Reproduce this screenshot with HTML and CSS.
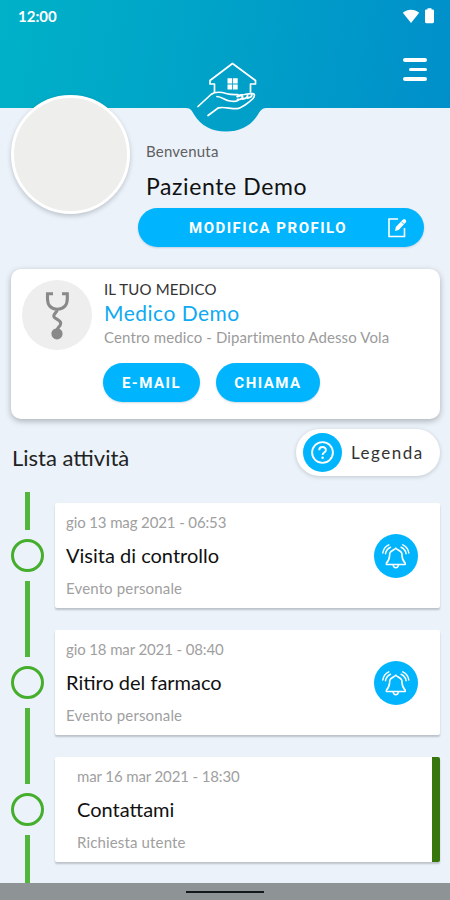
FILE: index.html
```html
<!DOCTYPE html>
<html lang="it">
<head>
    <meta charset="UTF-8">
    <meta name="viewport" content="width=device-width, initial-scale=1.0">
    <title>Paziente Demo</title>
    <link rel="stylesheet" href="styles.css">
</head>
<body>
    <svg width="0" height="0" class="defs">
        <symbol id="bell" viewBox="0 0 44 44">
            <g fill="none" stroke="#fff" stroke-width="1.6" stroke-linecap="round" stroke-linejoin="round">
                <path d="M21.800 14.200c-1 1.600-5.200 2.600-6 5-.5 4 .3 6.500-3.400 9.800v1.500h18.800v-1.500c-3.700-3.300-2.900-5.800-3.400-9.800-.8-2.400-5-3.400-6-5z"/>
                <path d="M19.200 31c.4 3.600 4.800 3.600 5.200 0"/>
                <path d="M14.800 10.800c-3.500 1.700-5.500 4.500-6 8.200M16.500 13.200c-3 1.400-4.600 3.600-5 6.500M28.800 10.800c3.500 1.700 5.500 4.500 6 8.200M27.100 13.200c3 1.400 4.600 3.600 5 6.500" stroke-width="1.500"/>
            </g>
        </symbol>
    </svg>

    <div class="header">
        <div class="status-bar">
            <span>12:00</span>
            <div class="status-icons">
                <svg width="18" height="15" viewBox="0 0 18 15"><path d="M.8 3.800C5.500-.4 12.500-.4 17.200 3.800L9 14z" fill="#fff"/></svg>
                <svg width="9" height="16" viewBox="0 0 9 16"><path d="M2.500 1.500V.3h4v1.200h1.200Q9 1.500 9 2.800v11Q9 15.200 7.700 15.200H1.300Q0 15.200 0 13.800v-11Q0 1.500 1.300 1.500z" fill="#fff"/></svg>
            </div>
        </div>
        <div class="menu">
            <span></span>
            <span class="short"></span>
            <span></span>
        </div>
        <svg class="logo" width="100" height="84" viewBox="0 0 100 84">
            <path d="M6 58C11 58 12 61 14 64.500C21 76 32 81.500 46 81.500S71 76 78 64.500C80 61 82 58 86 58z" fill="#00a0c8"/>
            <g fill="none" stroke="#fff" stroke-width="1.700" stroke-linejoin="round" stroke-linecap="round">
                <path d="M34.500 42V34h-4.500v-3.500L52.500 13.500l23 17V34h-5v8"/>
                <path d="M18 56.500L31 44.500c4.500-3.500 12-2 16-.8 3.500 1 7 .8 11 .9"/>
                <path d="M37 46.500c5 .3 8 4 13 4.500 3 .4 8 .6 8.500-1.500"/>
                <path d="M28 65.500l10.500-7.700c6-1.300 12.500 1.200 18.500.8 4.500-.5 12.500-6.500 16-10.100 2-2.500 1.800-4.500 0-4.800-3-.5-6 .3-8.500.8-3 0-5.500.5-7.500 2"/>
                <path d="M57.500 49.500c3 .5 5.500-1.500 5-3s-2.500-1.200-4.500 0M62.500 49c3 0 5.500-2 5-3.500M67.500 48c3-.5 4.500-2 4.300-3.500" stroke-width="1.900"/>
            </g>
            <path d="M47.500 28.300h4.700v5.200h-4.700zM53 28.300h4.700v5.200H53zM47.500 34.400h4.700v5.200h-4.700zM53 34.400h4.700v5.200H53z" fill="#fff"/>
        </svg>
    </div>

    <div class="profile">
        <div class="avatar"></div>
        <div class="profile-info">
            <div class="welcome">Benvenuta</div>
            <div class="patient">Paziente Demo</div>
            <div class="btn btn-profile">
                <span>MODIFICA PROFILO</span>
                <svg width="21" height="22" viewBox="0 0 21 22">
                    <path d="M11 2H2v17.500h15.500V11" fill="none" stroke="#fff" stroke-width="1.600"/>
                    <path d="M8 14l.8-4L16 2.500q1.200-1 2.300 0l.5.500q1 1.200 0 2.300L11.700 13z" fill="#fff"/>
                    <path d="M14.500 4.800l2.300 2.300" stroke="#00b5fd" stroke-width=".8"/>
                </svg>
            </div>
        </div>
    </div>

    <div class="doctor">
        <svg class="doctor-icon" width="70" height="70" viewBox="0 0 70 70">
            <circle cx="35" cy="35" r="35" fill="#eee"/>
            <path d="M31 13.800h-5.500v5c0 7 4 10.400 9.800 10.400s10-3.400 10-10.400v-5H40M35.300 29.200c-.2 4-4 4.300-3.600 7 .4 2.800 7.300 3.300 7 7.300-.2 3.500-4 3.500-4 8" fill="none" stroke="#898989" stroke-width="3.100"/>
            <circle cx="35" cy="53.800" r="5.600" fill="#898989"/>
        </svg>
        <div>
            <div class="doctor-label">IL TUO MEDICO</div>
            <div class="doctor-name">Medico Demo</div>
            <div class="doctor-place">Centro medico - Dipartimento Adesso Vola</div>
            <div class="doctor-actions">
                <div class="btn btn-mail">E-MAIL</div>
                <div class="btn btn-call">CHIAMA</div>
            </div>
        </div>
    </div>

    <div class="list-header">
        <h2>Lista attività</h2>
        <div class="legend">
            <svg width="39" height="39" viewBox="0 0 39 39">
                <circle cx="19.500" cy="19.500" r="19.500" fill="#00b5fd"/>
                <circle cx="19.500" cy="19.500" r="10.400" fill="none" stroke="#fff" stroke-width="1.900"/>
                <path d="M16.200 17.300c0-4.400 6.700-4.400 6.700-.3 0 2.600-3.300 2.600-3.300 5" fill="none" stroke="#fff" stroke-width="1.900"/>
                <circle cx="19.600" cy="24.800" r="1.200" fill="#fff"/>
            </svg>
            <span>Legenda</span>
        </div>
    </div>

    <div class="timeline">
        <div class="row">
            <div class="track"><i></i><b></b><i></i></div>
            <div class="card">
                <div class="card-text">
                    <div class="date">gio 13 mag 2021 - 06:53</div>
                    <div class="title">Visita di controllo</div>
                    <div class="kind">Evento personale</div>
                </div>
                <div class="alarm"><svg width="44" height="44"><use href="#bell"/></svg></div>
            </div>
        </div>
        <div class="row">
            <div class="track"><i></i><b></b><i></i></div>
            <div class="card">
                <div class="card-text">
                    <div class="date">gio 18 mar 2021 - 08:40</div>
                    <div class="title">Ritiro del farmaco</div>
                    <div class="kind">Evento personale</div>
                </div>
                <div class="alarm"><svg width="44" height="44"><use href="#bell"/></svg></div>
            </div>
        </div>
        <div class="row">
            <div class="track"><i></i><b></b><i></i></div>
            <div class="card request">
                <div class="card-text">
                    <div class="date">mar 16 mar 2021 - 18:30</div>
                    <div class="title">Contattami</div>
                    <div class="kind">Richiesta utente</div>
                </div>
            </div>
        </div>
        <div class="row">
            <div class="track"><i></i><b></b><i></i></div>
        </div>
    </div>

    <div class="nav-bar"><span></span></div>
</body>
</html>
```
FILE: styles.css
```css
* {
    box-sizing: border-box;
}
body {
    font-family: Lato, "Liberation Sans", sans-serif;
    margin: 0;
    width: 450px;
    height: 900px;
    overflow: hidden;
    background-color: #ebf2fa;
    color: #111;
    display: flex;
    flex-direction: column;
}
.defs {
    position: absolute;
}
.header {
    position: relative;
    flex: none;
    height: 108px;
    background: linear-gradient(100deg, #00b1c8 0%, #00a1c8 50%, #008fca 100%);
}
.status-bar {
    display: flex;
    justify-content: space-between;
    align-items: center;
    height: 32px;
    padding: 0 16px 0 18px;
    color: #fff;
    font-size: 15px;
    font-weight: bold;
}
.status-icons {
    display: flex;
    align-items: center;
    gap: 5px;
}
.menu {
    display: flex;
    flex-direction: column;
    align-items: flex-end;
    gap: 6px;
    margin-top: 26px;
    padding-right: 23px;
}
.menu span {
    width: 24px;
    height: 3.500px;
    border-radius: 2px;
    background-color: #fff;
}
.menu .short {
    width: 18px;
}
.logo {
    position: absolute;
    left: 180px;
    top: 50px;
}
.profile {
    flex: none;
    display: flex;
    height: 161px;
    padding-left: 11px;
}
.avatar {
    position: relative;
    flex: none;
    width: 119px;
    height: 119px;
    margin-top: -13px;
    border: 3px solid #fff;
    border-radius: 50%;
    background-color: #eeeeed;
    box-shadow: 0 2px 5px rgba(0, 0, 0, 0.2);
}
.profile-info {
    padding: 33px 0 0 8px;
}
.welcome {
    padding-left: 8px;
    font-size: 15px;
    line-height: 20px;
    letter-spacing: 0.200px;
    color: #606060;
}
.patient {
    padding: 11px 0 0 8px;
    font-size: 23px;
    line-height: 28px;
    letter-spacing: 0.600px;
    margin-bottom: 8px;
}
.btn {
    display: flex;
    align-items: center;
    justify-content: center;
    height: 39px;
    padding-top: 1px;
    border-radius: 20px;
    background-color: #00b5fd;
    color: #fff;
    font-family: Roboto, "Liberation Sans", sans-serif;
    font-size: 15px;
    font-weight: bold;
    letter-spacing: 1.500px;
    box-shadow: 0 1px 2px rgba(0, 80, 140, 0.2);
}
.btn-profile {
    width: 286px;
    justify-content: space-between;
    padding: 1px 16px 0 51px;
}
.doctor {
    flex: none;
    display: flex;
    gap: 12px;
    height: 150px;
    margin: 0 10px 0 11px;
    padding: 11px;
    border-radius: 10px;
    background-color: #fff;
    box-shadow: 0 2px 6px rgba(0, 0, 0, 0.28);
}
.doctor-icon {
    flex: none;
}
.doctor-label {
    font-size: 15px;
    line-height: 18px;
    letter-spacing: 0.150px;
    color: #333;
}
.doctor-name {
    font-size: 21px;
    line-height: 30px;
    letter-spacing: 0.500px;
    color: #10a9f2;
}
.doctor-place {
    font-size: 15px;
    line-height: 18px;
    letter-spacing: 0.120px;
    color: #9b9b9b;
    white-space: nowrap;
}
.doctor-actions {
    display: flex;
    gap: 16px;
    margin: 17px 0 0 -1px;
}
.btn-mail {
    width: 97px;
}
.btn-call {
    width: 104px;
}
.list-header {
    flex: none;
    display: flex;
    justify-content: space-between;
    height: 73px;
    padding: 10px 10px 0 12px;
}
h2 {
    margin: 15px 0 0;
    font-size: 22px;
    line-height: 28px;
    font-weight: normal;
    color: #222;
}
.legend {
    display: flex;
    align-items: center;
    gap: 9px;
    width: 144px;
    height: 47px;
    padding-left: 7px;
    border-radius: 24px;
    background-color: #fff;
    color: #333;
    font-size: 17px;
    letter-spacing: 1.500px;
    box-shadow: 0 1px 4px rgba(0, 0, 0, 0.18);
}
.timeline {
    flex: 1;
    min-height: 0;
    overflow: hidden;
}
.row {
    display: flex;
    height: 127px;
    padding: 0 10px 0 11px;
}
.track {
    display: flex;
    flex-direction: column;
    align-items: center;
    gap: 9px;
    width: 33px;
    margin-right: 11px;
}
.track i {
    flex: 1;
    width: 5px;
    background-color: #52b53c;
}
.track b {
    width: 33px;
    height: 33px;
    border: 3px solid #45ae2c;
    border-radius: 50%;
}
.card {
    flex: 1;
    display: flex;
    justify-content: space-between;
    height: 105px;
    margin-top: 11px;
    padding: 8px 22px 0 11px;
    border-radius: 2px;
    background-color: #fff;
    box-shadow: 0 2px 2px rgba(0, 0, 0, 0.2);
}
.request {
    padding-left: 22px;
    border-right: 8px solid #36760d;
}
.date {
    font-size: 15px;
    line-height: 22px;
    letter-spacing: -0.120px;
    color: #a0a0a0;
}
.title {
    margin: 8px 0 9px;
    font-size: 20px;
    line-height: 28px;
}
.kind {
    font-size: 15px;
    line-height: 20px;
    letter-spacing: 0.150px;
    color: #a0a0a0;
}
.alarm {
    width: 44px;
    height: 44px;
    margin-top: 23px;
    border-radius: 50%;
    background-color: #00b5fd;
}
.nav-bar {
    flex: none;
    display: flex;
    justify-content: center;
    align-items: center;
    height: 17px;
    background-color: #8e9396;
}
.nav-bar span {
    width: 78px;
    height: 2px;
    background-color: #15181a;
}
```
